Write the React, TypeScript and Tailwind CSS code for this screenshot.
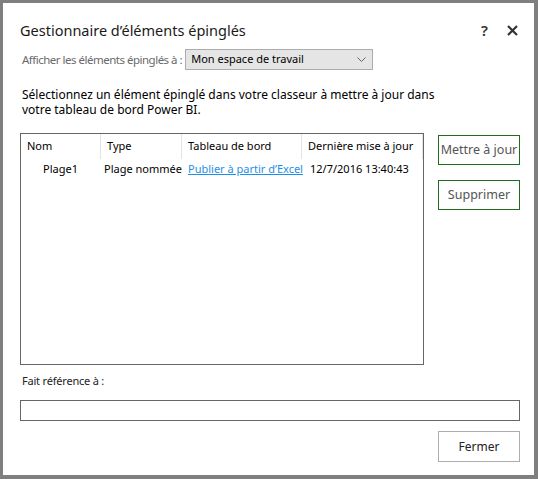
import React from "react";

const cols = [
  { name: "Nom", w: "w-[80px]" },
  { name: "Type", w: "w-[81px]" },
  { name: "Tableau de bord", w: "w-[120px]" },
  { name: "Dernière mise à jour", w: "flex-1" },
];

const App = () => {
  return (
    <div
      className="w-[538px] h-[479px] bg-white border-t-[3px] border-l-[3px] border-r-4 border-b-4 border-[#7f7f7f] flex flex-col pl-[17px] pr-[14px] text-black"
      style={{ fontFamily: '"Noto Sans", "Open Sans", sans-serif' }}
    >
      {/* title bar */}
      <div className="mt-[16px] h-[22px] flex items-center justify-between">
        <h1 className="text-[14.5px] leading-[22px] text-[#1a1a1a]">Gestionnaire d’éléments épinglés</h1>
        <div className="flex items-center gap-[19px] pr-[2px]">
          <span className="text-[15px] font-semibold text-[#333]">?</span>
          <svg width="11" height="11" viewBox="0 0 11 11">
            <path d="M1 1 L10 10 M10 1 L1 10" stroke="#333" strokeWidth="2.2" />
          </svg>
        </div>
      </div>

      {/* workspace select */}
      <div className="mt-[8px] h-[21px] flex items-center">
        <span className="ml-[2px] text-[11.5px] tracking-[-0.5px] text-[#6a6a6a] whitespace-nowrap">
          Afficher les éléments épinglés à :
        </span>
        <div className="ml-[3px] w-[188px] h-[21px] bg-[#e5e5e5] border border-[#acacac] flex items-center justify-between pl-[5px] pr-[6px]">
          <span className="text-[11px]">Mon espace de travail</span>
          <svg width="9" height="6" viewBox="0 0 9 6">
            <path d="M0.5 0.5 L4.5 4.5 L8.5 0.5" stroke="#666" fill="none" strokeWidth="1" />
          </svg>
        </div>
      </div>

      <p className="mt-[17px] ml-[2px] text-[12px] leading-[15px] w-[440px]">
        Sélectionnez un élément épinglé dans votre classeur à mettre à jour dans votre tableau de bord Power BI.
      </p>

      {/* table + actions */}
      <div className="mt-[16px] flex">
        <div className="w-[404px] h-[232px] border border-[#666]">
          <div className="flex h-[25px] text-[11px]">
            {cols.map((c) => (
              <div
                key={c.name}
                className={`${c.w} border-r border-[#e3e3e3] pl-[6px] flex items-center whitespace-nowrap`}
              >
                {c.name}
              </div>
            ))}
          </div>
          <div className="flex h-[20px] text-[11px] items-center">
            <div className="w-[80px] pl-[22px]">Plage1</div>
            <div className="w-[81px] pl-[3px] whitespace-nowrap">Plage nommée</div>
            <div className="w-[120px] pl-[6px] whitespace-nowrap">
              <span className="text-[#1e8fe8] underline">Publier à partir d’Excel</span>
            </div>
            <div className="flex-1 pl-[8px] whitespace-nowrap">12/7/2016 13:40:43</div>
          </div>
        </div>
        <div className="ml-[14px] mt-[2px] flex flex-col gap-[15px]">
          <button className="w-[82px] h-[30px] border border-[#1f6e1f] text-[12.5px] text-[#555] whitespace-nowrap">
            Mettre à jour
          </button>
          <button className="w-[82px] h-[30px] border border-[#1f6e1f] text-[12.5px] text-[#555]">Supprimer</button>
        </div>
      </div>

      <div className="mt-[8px] ml-[2px] text-[11px] leading-[16px] tracking-[-0.2px] text-[#222]">Fait référence à :</div>
      <div className="mt-[11px] h-[21px] w-[500px] border border-[#666]" />

      <div className="mt-[10px] flex justify-end">
        <button className="w-[82px] h-[31px] border border-[#adadad] text-[12px] text-[#222]">Fermer</button>
      </div>
    </div>
  );
};

export default App;
